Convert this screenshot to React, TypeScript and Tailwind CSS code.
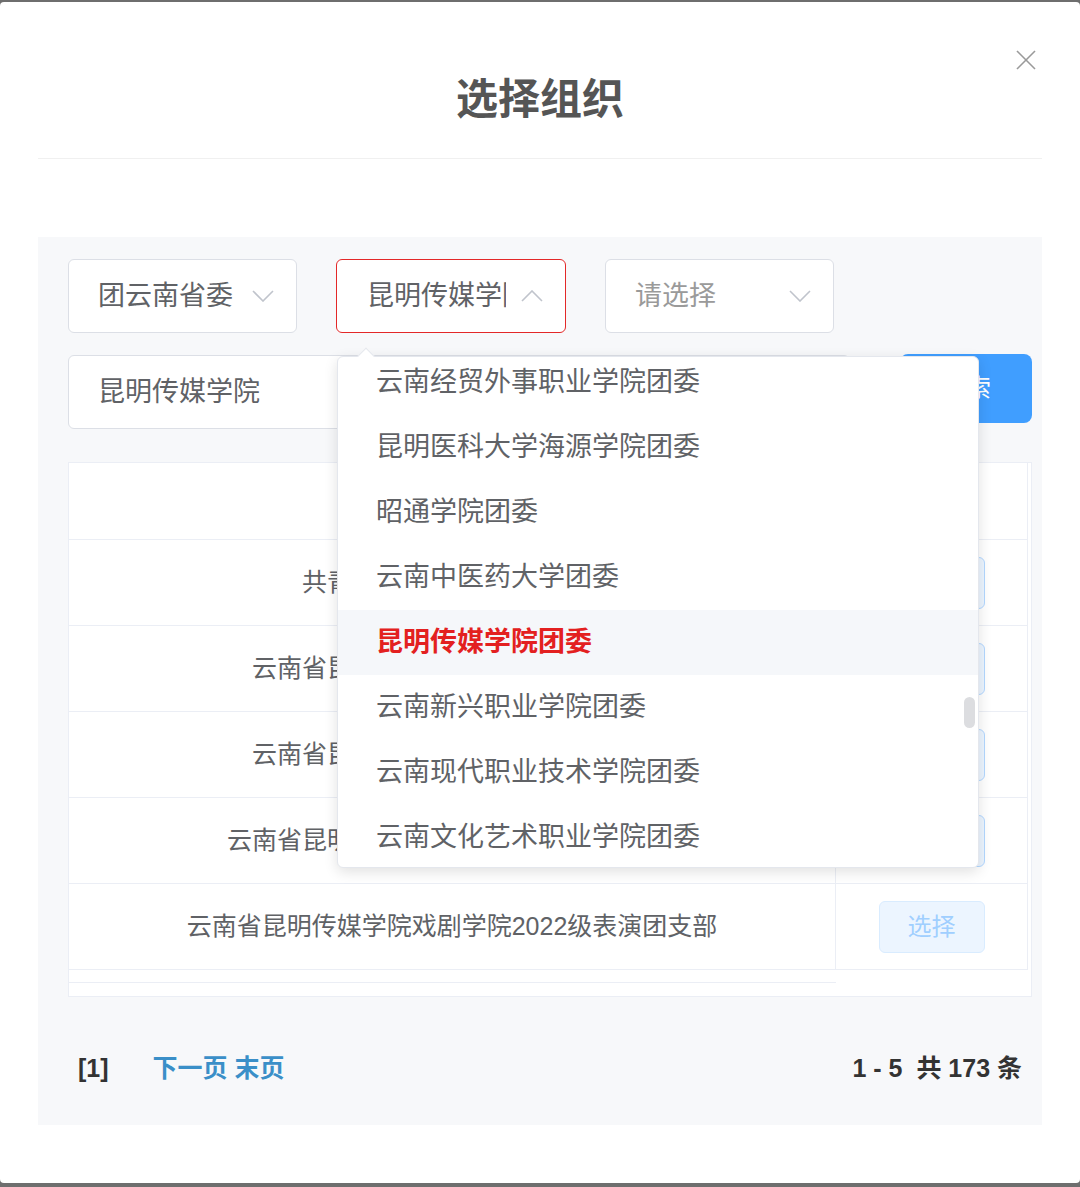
import React from "react";

const ChevronDown = () => (
  <svg width="22" height="12" viewBox="0 0 22 12" fill="none">
    <polyline points="1,1 11,11 21,1" stroke="#c0c4cc" strokeWidth="1.6" />
  </svg>
);
const ChevronUp = () => (
  <svg width="22" height="12" viewBox="0 0 22 12" fill="none">
    <polyline points="1,11 11,1 21,11" stroke="#c0c4cc" strokeWidth="1.6" />
  </svg>
);

const options = [
  "云南经贸外事职业学院团委",
  "昆明医科大学海源学院团委",
  "昭通学院团委",
  "云南中医药大学团委",
  "昆明传媒学院团委",
  "云南新兴职业学院团委",
  "云南现代职业技术学院团委",
  "云南文化艺术职业学院团委",
  "云南艺术学院文华学院团委",
];

const rows = [
  { name: "共青团昆明传媒学院委员会", disabled: false },
  { name: "云南省昆明传媒学院影视学院团总支", disabled: false },
  { name: "云南省昆明传媒学院戏剧学院团总支", disabled: false },
  { name: "云南省昆明传媒学院设计学院学生团总支", disabled: false },
  { name: "云南省昆明传媒学院戏剧学院2022级表演团支部", disabled: true },
];

export default function App() {
  return (
    <div className="min-h-[1187px] bg-[#6e6e6e] pt-[2px] font-['Liberation_Sans','Noto_Sans_CJK_SC',sans-serif]">
      <div className="relative h-[1181px] rounded-[4px] bg-white">
        <button className="absolute right-[44px] top-[48px] h-[20px] w-[20px]">
          <svg width="20" height="20" viewBox="0 0 20 20">
            <line x1="1" y1="1" x2="19" y2="19" stroke="#9a9a9a" strokeWidth="1.6" />
            <line x1="19" y1="1" x2="1" y2="19" stroke="#9a9a9a" strokeWidth="1.6" />
          </svg>
        </button>

        <div className="mx-[38px] border-b border-[#f0f0f0] pt-[70px] pb-[30px]">
          <h1 className="text-center text-[42px] font-bold leading-[56px] text-[#555555]">
            选择组织
          </h1>
        </div>

        <div className="relative mx-[38px] mt-[78px] h-[888px] bg-[#f7f8fa] pl-[30px] pt-[22px]">
          {/* Select row */}
          <div className="flex gap-[39px]">
            <div className="flex h-[74px] w-[229px] items-center justify-between rounded-[6px] border border-[#dcdfe6] bg-white pl-[29px] pr-[22px]">
              <span className="text-[27px] text-[#606266]">团云南省委</span>
              <ChevronDown />
            </div>
            <div className="flex h-[74px] w-[230px] items-center justify-between rounded-[6px] border-[1.5px] border-[#e32828] bg-white pl-[30px] pr-[22px]">
              <span className="w-[139px] overflow-hidden whitespace-nowrap text-[27px] text-[#606266]">
                昆明传媒学院团委
              </span>
              <ChevronUp />
            </div>
            <div className="flex h-[74px] w-[229px] items-center justify-between rounded-[6px] border border-[#dcdfe6] bg-white pl-[29px] pr-[22px]">
              <span className="text-[27px] text-[#9a9a9a]">请选择</span>
              <ChevronDown />
            </div>
          </div>

          {/* Search row */}
          <div className="mt-[22px] flex items-start">
            <div className="flex h-[74px] w-[782px] items-center rounded-[6px] border border-[#dcdfe6] bg-white pl-[29px]">
              <span className="text-[27px] text-[#606266]">昆明传媒学院</span>
            </div>
            <button className="ml-[50px] -mt-[1px] flex h-[69px] w-[132px] items-center justify-center rounded-[8px] bg-[#409eff] text-[25px] text-white">
              搜索
            </button>
          </div>

          {/* Table */}
          <div className="mt-[33px] h-[535px] w-[964px] border border-[#ebeef5] bg-white">
            <div className="w-[959px] border-r border-[#ebeef5]">
              <div className="flex h-[77px] border-b border-[#ebeef5] text-[24px] font-bold text-[#909399]">
                <div className="flex w-[767px] items-center justify-center border-r border-[#ebeef5]">组织名称</div>
                <div className="flex w-[191px] items-center justify-center">操作</div>
              </div>
              {rows.map((r) => (
                <div key={r.name} className="flex h-[86px] border-b border-[#ebeef5]">
                  <div className="flex w-[767px] items-center justify-center border-r border-[#ebeef5] text-[25px] text-[#606266]">
                    {r.name}
                  </div>
                  <div className="flex w-[191px] items-center justify-center">
                    <button
                      className={
                        r.disabled
                          ? "flex h-[52px] w-[106px] items-center justify-center rounded-[6px] border border-[#d9ecff] bg-[#ecf5ff] text-[24px] text-[#a0cfff]"
                          : "flex h-[52px] w-[106px] items-center justify-center rounded-[6px] border border-[#b3d8ff] bg-[#ecf5ff] text-[24px] text-[#409eff]"
                      }
                    >
                      选择
                    </button>
                  </div>
                </div>
              ))}
            </div>
            <div className="h-[25px] pt-[12px]">
              <div className="h-px w-[767px] bg-[#ebeef5]" />
            </div>
          </div>

          {/* Pagination */}
          <div className="mt-[54px] flex h-[34px] items-center justify-between pl-[10px] pr-[20px] text-[25px] font-bold leading-[34px]">
            <div className="flex items-center">
              <span className="text-[#333333]">[1]</span>
              <span className="ml-[44px] text-[#3a8fc8]">下一页 末页</span>
            </div>
            <div className="whitespace-pre text-[#333333]">1 - 5  共 173 条</div>
          </div>

          {/* Dropdown */}
          <div className="absolute left-[299px] top-[119px] h-[512px] w-[642px] rounded-[6px] border border-[#e4e7ed] bg-white shadow-[0_4px_14px_rgba(0,0,0,0.12)]">
            <div className="absolute -top-[7px] left-[22px] h-[12px] w-[12px] rotate-45 border-l border-t border-[#e4e7ed] bg-white" />
            <div className="h-full overflow-hidden rounded-[6px]">
              <div className="-mt-[7px]">
                {options.map((o) => {
                  const active = o === "昆明传媒学院团委";
                  return (
                    <div
                      key={o}
                      className={
                        active
                          ? "flex h-[65px] items-center bg-[#f5f7fa] pl-[38px] text-[27px] font-bold text-[#e32020]"
                          : "flex h-[65px] items-center pl-[38px] text-[27px] text-[#606266]"
                      }
                    >
                      {o}
                    </div>
                  );
                })}
              </div>
            </div>
            <div className="absolute left-[626px] top-[340px] h-[31px] w-[11px] rounded-full bg-[#dcdde0]" />
          </div>
        </div>
      </div>
    </div>
  );
}
